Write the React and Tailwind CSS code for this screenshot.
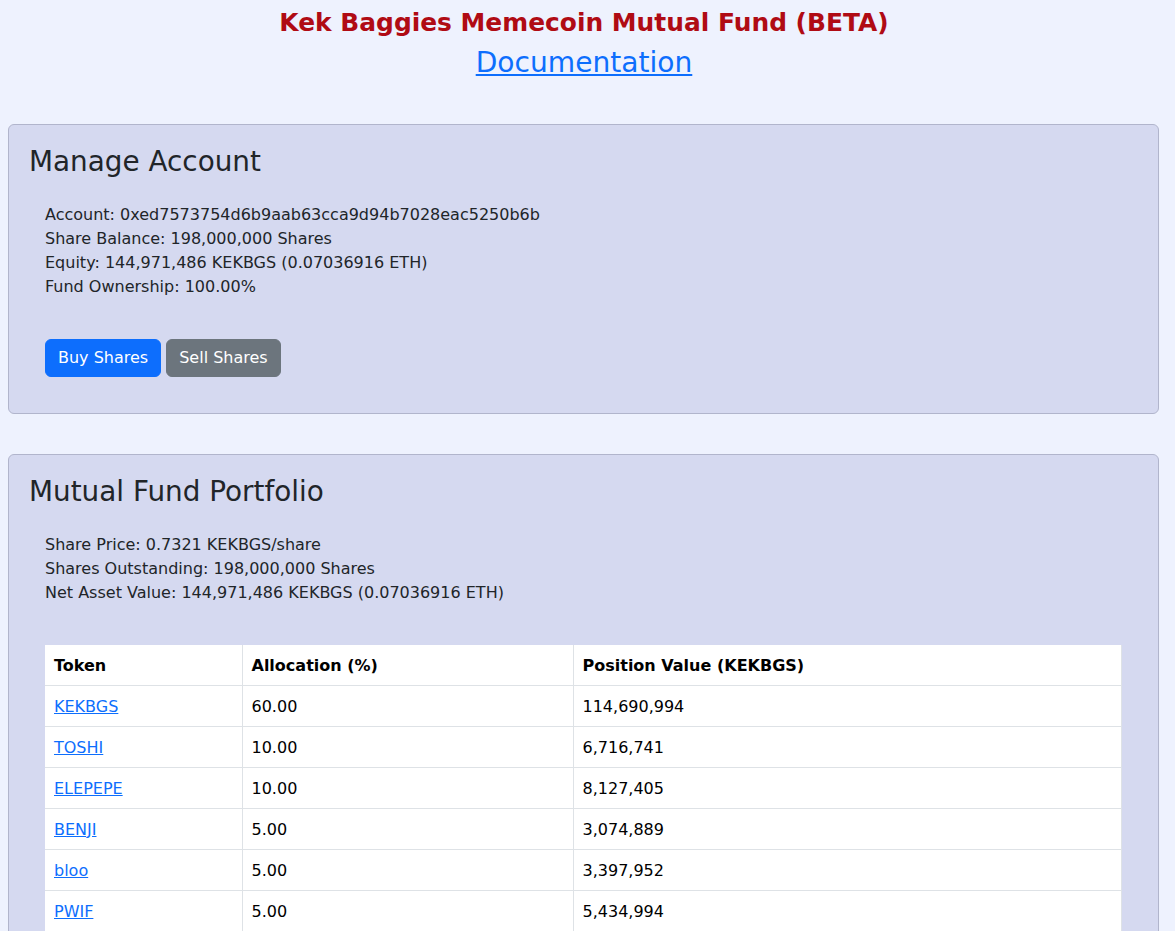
import React from 'react';

const account = [
  'Account: 0xed7573754d6b9aab63cca9d94b7028eac5250b6b',
  'Share Balance: 198,000,000 Shares',
  'Equity: 144,971,486 KEKBGS (0.07036916 ETH)',
  'Fund Ownership: 100.00%',
];

const portfolio = [
  'Share Price: 0.7321 KEKBGS/share',
  'Shares Outstanding: 198,000,000 Shares',
  'Net Asset Value: 144,971,486 KEKBGS (0.07036916 ETH)',
];

const holdings = [
  { token: 'KEKBGS', alloc: '60.00', value: '114,690,994' },
  { token: 'TOSHI', alloc: '10.00', value: '6,716,741' },
  { token: 'ELEPEPE', alloc: '10.00', value: '8,127,405' },
  { token: 'BENJI', alloc: '5.00', value: '3,074,889' },
  { token: 'bloo', alloc: '5.00', value: '3,397,952' },
  { token: 'PWIF', alloc: '5.00', value: '5,434,994' },
];

const Card = ({ title, children }) => (
  <div className="ml-2 mr-4 rounded-[6px] border border-[#b1b5cc] bg-[#d5d9f0] p-5">
    <h3 className="text-[27.85px] leading-[34px] font-normal text-[#212529]">{title}</h3>
    {children}
  </div>
);

export default function App() {
  const cell = 'pl-[9px] pr-[7px] pt-[9px] pb-[7px] border-b border-r border-[#dee2e6] text-left align-top';
  return (
    <div
      className="min-h-screen bg-[#eef2fe] text-[16px] leading-6 text-[#212529]"
      style={{ fontFamily: '"DejaVu Sans", sans-serif' }}
    >
      <div className="pt-2 pr-[7px] text-center">
        <h1 className="text-[24.9px] leading-[1.2] font-bold text-[#b00b14]">
          Kek Baggies Memecoin Mutual Fund (BETA)
        </h1>
        <h3 className="mt-2 text-[28.1px] leading-[1.2]">
          <a href="#" className="text-[#0d6efd] underline">Documentation</a>
        </h3>
      </div>

      <div className="mt-[44px]">
        <Card title="Manage Account">
          <div className="mt-6 px-4">
            {account.map((l) => (
              <div key={l}>{l}</div>
            ))}
          </div>
          <div className="mt-[40px] mb-4 flex gap-[5px] px-4">
            <button className="rounded-[6px] border border-[#0d6efd] bg-[#0d6efd] px-3 py-[6px] text-white leading-6">Buy Shares</button>
            <button className="rounded-[6px] border border-[#6c757d] bg-[#6c757d] px-3 py-[6px] text-white leading-6">Sell Shares</button>
          </div>
        </Card>
      </div>

      <div className="mt-10">
        <Card title="Mutual Fund Portfolio">
          <div className="mt-6 px-4">
            {portfolio.map((l) => (
              <div key={l}>{l}</div>
            ))}
          </div>
          <div className="mt-[40px] px-4">
            <table className="w-full border-collapse bg-white text-black">
              <thead>
                <tr>
                  <th className={`${cell} w-[197px] font-bold`}>Token</th>
                  <th className={`${cell} w-[331px] font-bold`}>Allocation (%)</th>
                  <th className={`${cell} font-bold`}>Position Value (KEKBGS)</th>
                </tr>
              </thead>
              <tbody>
                {holdings.map((h) => (
                  <tr key={h.token}>
                    <td className={cell}>
                      <a href="#" className="text-[#0d6efd] underline">{h.token}</a>
                    </td>
                    <td className={cell}>{h.alloc}</td>
                    <td className={cell}>{h.value}</td>
                  </tr>
                ))}
              </tbody>
            </table>
          </div>
        </Card>
      </div>
    </div>
  );
}
